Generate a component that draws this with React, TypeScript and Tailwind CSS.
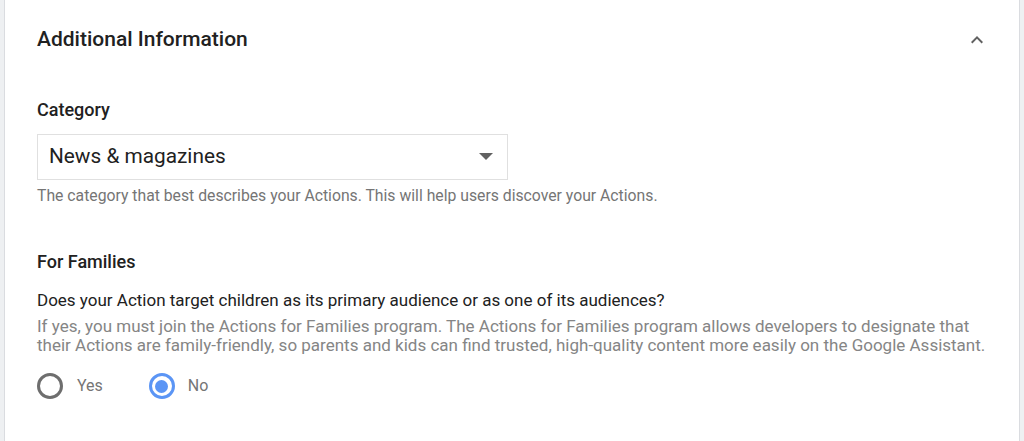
import React, { useState } from "react";

const App = () => {
  const [forKids, setForKids] = useState("no");

  return (
    <div className="w-[1024px] h-[441px] bg-[#eef0f2] pl-[4px] overflow-hidden" style={{ fontFamily: "Roboto, 'Liberation Sans', sans-serif" }}>
      <div className="w-[1016px] h-[441px] bg-white border-l border-r border-[#dadce0] pl-[32px] pr-[20px] pt-[2px]">
        <div className="flex items-center justify-between h-[76px] pr-[10px]">
          <h2 className="text-[21px] font-medium text-[#212121]">Additional Information</h2>
          <svg width="24" height="24" viewBox="0 0 24 24">
            <path d="M7.41 15.41 12 10.83l4.59 4.58L18 14l-6-6-6 6z" fill="#616161" />
          </svg>
        </div>

        <div className="mt-[20px]">
          <div className="text-[18px] font-medium text-[#212121] leading-[24px]">Category</div>
          <button className="mt-[12px] w-[471px] h-[46px] border border-[#e0e0e0] flex items-center justify-between pl-[11px] pr-[14px]">
            <span className="text-[20.8px] text-[#212121]">News &amp; magazines</span>
            <svg width="14" height="8" viewBox="0 0 14 8">
              <path d="M0 0h14L7 7z" fill="#616161" />
            </svg>
          </button>
          <p className="mt-[6px] text-[15.75px] text-[#757575] leading-[20px]">
            The category that best describes your Actions. This will help users discover your Actions.
          </p>
        </div>

        <div className="mt-[44px]">
          <div className="text-[18px] font-medium text-[#212121] leading-[24px]">For Families</div>
          <p className="mt-[16px] text-[17px] text-[#212121] leading-[20px]">
            Does your Action target children as its primary audience or as one of its audiences?
          </p>
          <p className="mt-[7px] text-[17px] text-[#858585] leading-[19px]">
            If yes, you must join the Actions for Families program. The Actions for Families program allows developers to designate that their Actions are family-friendly, so parents and kids can find trusted, high-quality content more easily on the Google Assistant.
          </p>
          <div className="mt-[18px] flex items-center">
            <label className="flex items-center cursor-pointer" onClick={() => setForKids("yes")}>
              <span className={`w-[26px] h-[26px] rounded-full border-[3px] flex items-center justify-center ${forKids === "yes" ? "border-[#5b95f5]" : "border-[#6e6e6e]"}`}>
                {forKids === "yes" && <span className="w-[13px] h-[13px] rounded-full bg-[#5b95f5]" />}
              </span>
              <span className="ml-[14px] text-[16px] text-[#757575]">Yes</span>
            </label>
            <label className="flex items-center cursor-pointer ml-[46px]" onClick={() => setForKids("no")}>
              <span className={`w-[26px] h-[26px] rounded-full border-[3px] flex items-center justify-center ${forKids === "no" ? "border-[#5b95f5]" : "border-[#6e6e6e]"}`}>
                {forKids === "no" && <span className="w-[13px] h-[13px] rounded-full bg-[#5b95f5]" />}
              </span>
              <span className="ml-[13px] text-[16px] text-[#757575]">No</span>
            </label>
          </div>
        </div>
      </div>
    </div>
  );
};

export default App;
